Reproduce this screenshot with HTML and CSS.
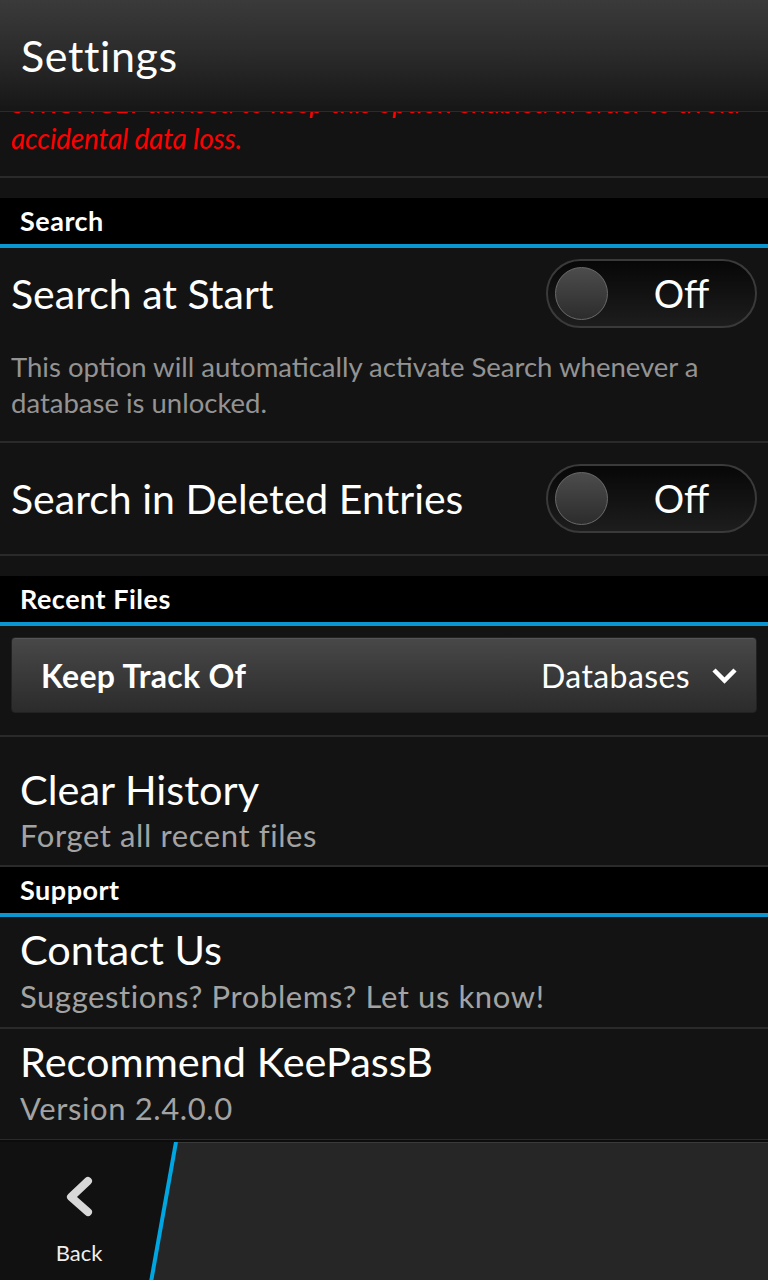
FILE: index.html
```html
<!DOCTYPE html>
<html lang="en">
<head>
<meta charset="utf-8">
<title>Settings</title>
<link rel="stylesheet" href="styles.css">
</head>
<body>
<div class="screen">
  <header class="titlebar"><h1 class="title">Settings</h1></header>
  <main class="content">
    <p class="warning">STRONGLY advised to keep this option enabled in order to avoid<br>accidental data loss.</p>
    <div class="spacer"></div>
    <div class="section-header">Search</div>
    <div class="toggle-row with-desc">
      <div class="row-top">
        <span class="row-title">Search at Start</span>
        <div class="toggle"><span class="knob"></span><span class="toggle-label">Off</span></div>
      </div>
      <p class="desc">This option will automatically activate Search whenever a<br>database is unlocked.</p>
    </div>
    <div class="toggle-row">
      <div class="row-top">
        <span class="row-title">Search in Deleted Entries</span>
        <div class="toggle"><span class="knob"></span><span class="toggle-label">Off</span></div>
      </div>
    </div>
    <div class="spacer"></div>
    <div class="section-header">Recent Files</div>
    <div class="dropdown-wrap">
      <div class="dropdown">
        <span class="dd-label">Keep Track Of</span>
        <span class="dd-value">Databases</span>
        <svg class="dd-chevron" width="27" height="17" viewBox="0 0 27 17"><polyline points="3,3 13.5,13.5 24,3" fill="none" stroke="#fff" stroke-width="4.5" stroke-linejoin="miter"/></svg>
      </div>
    </div>
    <div class="action-row clear">
      <div class="action-title">Clear History</div>
      <div class="action-sub">Forget all recent files</div>
    </div>
    <div class="section-header">Support</div>
    <div class="action-row">
      <div class="action-title">Contact Us</div>
      <div class="action-sub">Suggestions? Problems? Let us know!</div>
    </div>
    <div class="action-row">
      <div class="action-title">Recommend KeePassB</div>
      <div class="action-sub">Version 2.4.0.0</div>
    </div>
  </main>
  <footer class="actionbar">
    <div class="back">
      <svg class="back-icon" width="32" height="47" viewBox="0 0 32 47"><polyline points="25,8 8,24 25,39" fill="none" stroke="#d8d8d8" stroke-width="8" stroke-linecap="round" stroke-linejoin="round"/></svg>
      <span class="back-label">Back</span>
    </div>
    <div class="actionbar-rest"></div>
    <svg class="slash" width="200" height="140" viewBox="0 0 200 140"><line x1="176" y1="0" x2="151" y2="140" stroke="#00a6e2" stroke-width="4"/></svg>
  </footer>
</div>
</body>
</html>
```
FILE: styles.css
```css
* { box-sizing: border-box; margin: 0; padding: 0; }
html, body { width: 768px; height: 1280px; overflow: hidden; }
body {
  background: #131313;
  color: #fff;
  font-family: Lato, "Open Sans", "DejaVu Sans", sans-serif;
}
.screen { display: flex; flex-direction: column; height: 1280px; }

.titlebar {
  flex: none;
  height: 112px;
  background: linear-gradient(#3a3a3a 0%, #2c2c2c 45%, #161616 100%);
  border-bottom: 1px solid #2b2b2b;
  display: flex;
  align-items: center;
  padding-left: 21px;
}
.title { font-size: 43px; font-weight: 400; line-height: 1; color: #fff; letter-spacing: 0.6px; }

.content { flex: 1; overflow: hidden; background: #131313; }

.warning {
  margin-top: -28px;
  padding: 0 11px 20px;
  border-bottom: 2px solid #2a2a2a;
  color: #ff0000;
  font-style: italic;
  font-size: 28px;
  line-height: 36px;
  white-space: nowrap;
  letter-spacing: -0.2px;
}
.spacer { height: 20px; }

.section-header {
  height: 50px;
  background: #000;
  border-bottom: 4px solid #0a96d0;
  padding-left: 20px;
  font-size: 27px;
  font-weight: 700;
  line-height: 46px;
  letter-spacing: 0.5px;
}

.toggle-row {
  padding: 21px 11px;
  border-bottom: 2px solid #2a2a2a;
}
.toggle-row.with-desc { padding: 11px 11px 20px; }
.row-top { display: flex; align-items: center; justify-content: space-between; height: 69px; }
.row-title { font-size: 41px; line-height: 69px; }
.desc {
  margin-top: 21px;
  font-size: 27.5px;
  line-height: 36px;
  color: #939393;
  white-space: nowrap;
}

.toggle {
  width: 211px;
  height: 69px;
  border-radius: 35px;
  border: 2px solid #3a3a3a;
  background: linear-gradient(#070707, #1d1d1d);
  display: flex;
  align-items: center;
  padding-left: 7px;
}
.knob {
  flex: none;
  width: 53px;
  height: 53px;
  border-radius: 50%;
  border: 1px solid #6a6a6a;
  background: linear-gradient(#4c4c4c, #2c2c2c);
}
.toggle-label { flex: 1; text-align: center; font-size: 38px; line-height: 1; padding-bottom: 2px; }

.dropdown-wrap {
  padding: 11px 11px 22px;
  border-bottom: 2px solid #2a2a2a;
}
.dropdown {
  height: 76px;
  border-radius: 4px;
  border: 1px solid #222;
  box-shadow: inset 0 1px 0 #555;
  background: linear-gradient(#484848, #2b2b2b);
  display: flex;
  align-items: center;
  padding: 0 18px 0 29px;
}
.dd-label { font-size: 32px; font-weight: 700; letter-spacing: 0.3px; }
.dd-value { margin-left: auto; font-size: 32px; letter-spacing: 0.4px; }
.dd-chevron { margin-left: 21px; flex: none; }

.action-row {
  padding: 8px 20px 11px;
  border-bottom: 2px solid #2a2a2a;
}
.action-row.clear { padding: 28px 20px 10px; }
.action-title { font-size: 41.5px; line-height: 48px; }
.action-sub { margin-top: 3px; font-size: 31px; line-height: 40px; color: #a3a3a3; letter-spacing: 0.6px; }
.action-row.clear .action-sub { margin-top: 2px; }

.actionbar {
  flex: none;
  height: 140px;
  display: flex;
  position: relative;
  background: #262626;
  border-top: 2px solid #0c0c0c;
}
.back {
  width: 176px;
  padding-right: 18px;
  background: #111;
  clip-path: polygon(0 0, 176px 0, 151px 100%, 0 100%);
  display: flex;
  flex-direction: column;
  align-items: center;
}
.back-icon { margin-top: 31px; }
.back-label { margin-top: 18px; font-size: 22px; line-height: 30px; color: #eee; }
.actionbar-rest { flex: 1; box-shadow: inset 0 1px 0 #3a3a3a; }
.slash { position: absolute; left: 0; top: 0; }
```
